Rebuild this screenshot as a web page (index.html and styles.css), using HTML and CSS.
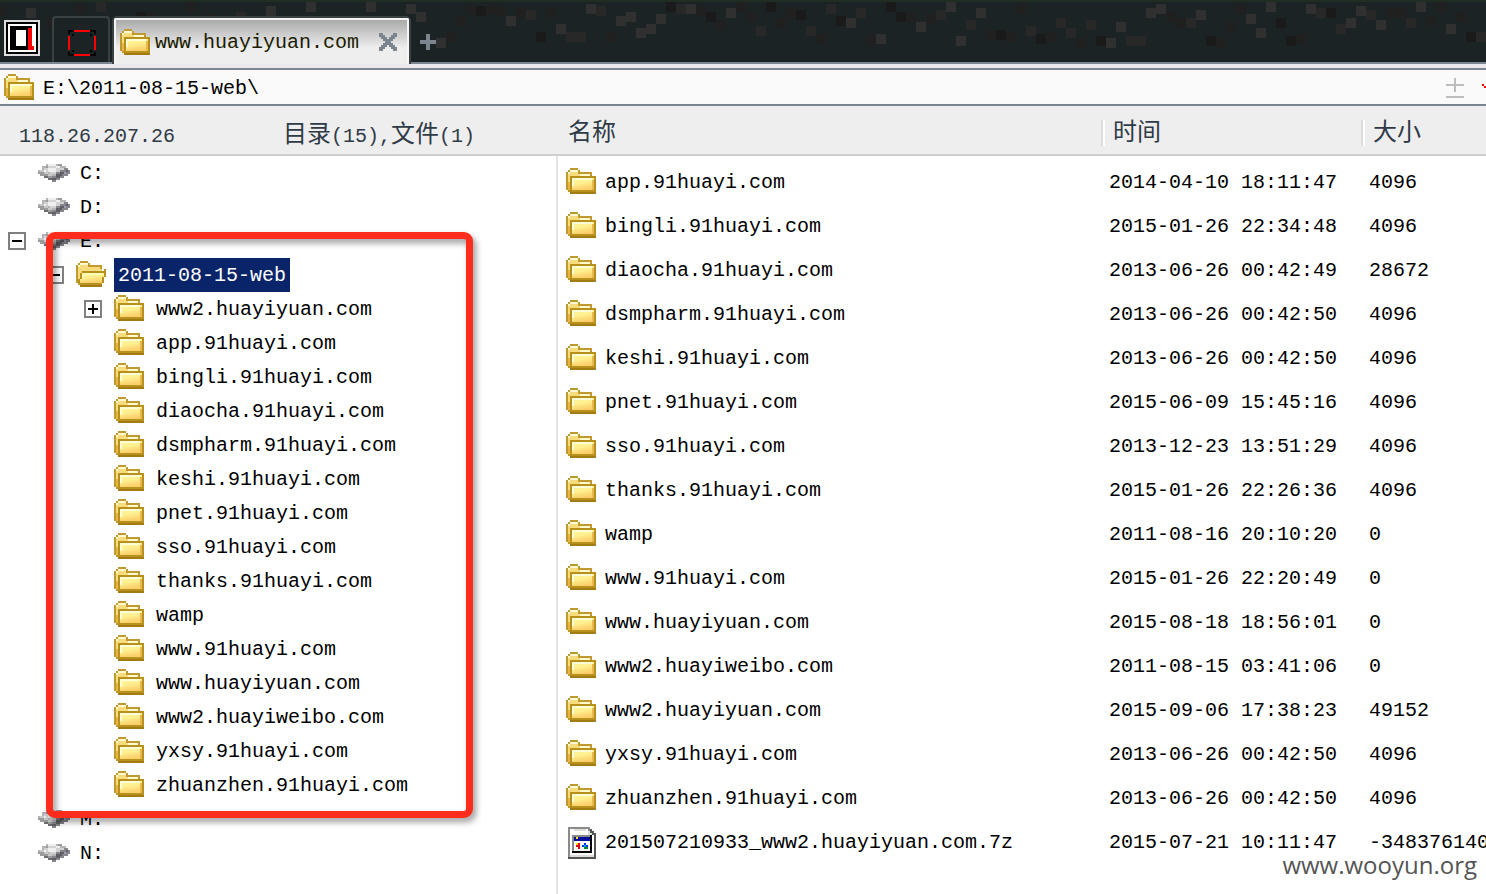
FILE: index.html
```
<!DOCTYPE html>
<html lang="zh-CN">
<head>
<meta charset="utf-8">
<title>www.huayiyuan.com</title>
<link rel="stylesheet" href="styles.css">
</head>
<body>
<svg class="defs" aria-hidden="true">
  <defs>
    <linearGradient id="paper" x1="0" y1="0" x2=".3" y2="1">
      <stop offset="0" stop-color="#fffa9c"/><stop offset=".5" stop-color="#ffef90"/><stop offset="1" stop-color="#fbcf6a"/>
    </linearGradient>
    <symbol id="folder" viewBox="0 0 15 13">
      <path fill="#f6dc7c" d="M1 2h1V1h4v1h1v1h6v8H1z"/>
      <path fill="#c09a30" d="M2 0h4v1H2zM1 1h1v1H1zM6 1h1v1h6v2h-1V3H6zM0 2h1v9H0zM1 11h1v1H1z"/>
      <path fill="#fffad0" d="M2 1h4v1H2zM1 2h1v1H1zM7 3h5v1H7z"/>
      <path fill="#e7b445" d="M1 7h1v4H1z"/>
      <path fill="#b8901c" d="M2 4h13v9H2z"/>
      <path fill="url(#paper)" d="M3 5h11v6H3z"/>
      <path fill="#fffcd8" d="M3 5h10v1H3zM3 6h1v3H3z"/>
      <path fill="#eab850" d="M13 6h1v5h-1z"/>
      <path fill="#a37a14" d="M2 12h13v1H2z"/>
    </symbol>
    <symbol id="folder-open" viewBox="0 0 15 13">
      <path fill="#f6dc7c" d="M1 2h1V1h4v1h7v10H1z"/>
      <path fill="#c09a30" d="M2 0h4v1H2zM1 1h1v1H1zM6 1h1v1h6v2h-1V3H6zM0 2h1v9H0zM1 11h1v1H1z"/>
      <path fill="#fffad0" d="M2 1h4v1H2zM1 2h1v1H1z"/>
      <path fill="#b8901c" d="M3 5h11V4h1v4h-1v3h-1v1H2v-1H1V9h1V6h1z"/>
      <path fill="url(#paper)" d="M3 6h11v2h-1v3H2V9h1z"/>
      <path fill="#fffcb8" d="M4 6h9v1H4zM3 7h1v2H3z"/>
      <path fill="#a37a14" d="M2 12h11v1H2z"/>
    </symbol>
    <symbol id="disk" viewBox="0 0 16 9">
      <path fill="#b4b4b4" d="M4 0h8v1h2v1h1v1h1v2h-1v1h-2v1h-2v1H9v1H7V8H5V7H3V6H1V5H0V3h2V1h2z"/>
      <path fill="#d2d2d2" d="M4 1h7v1h2v1h-2v1H9v1H6V4H3V2h1z"/>
      <path fill="#efefef" d="M5 0h4v1H5zM5 2h4v2H5zM3 3h1v1H3zM9 1h2v1H9z"/>
      <path fill="#9b9b9b" d="M0 4h3v1h2v1h2v1H4V6H1V5H0zM10 0h2v1h-2zM4 1h1v1H4z"/>
      <path fill="#c8c8c8" d="M1 3h2v1H1zM3 4h2v1H3zM5 5h2v1H5z"/>
      <path fill="#85858a" d="M9 4h2V3h2V2h2v1h1v2h-1v1h-2v1h-2v1H9v1H7V6h2z"/>
      <path fill="#5e5e66" d="M9 5h2V4h2v1h-1v1h-1v1H9zM14 3h1v1h-1zM7 7h2v1H7z"/>
      <path fill="#9c9cc4" d="M13 4h1v1h-1z"/>
      <path fill="#6c6c70" d="M3 6h2v1H3zM5 7h2v1H5z"/>
    </symbol>
    <symbol id="program" viewBox="0 0 14 16">
      <path fill="#555" d="M0 0h11v1h1v1h1v1h1v13H0z"/>
      <path fill="#8a8a8a" d="M0 0h11v4H2v11H0z"/>
      <path fill="#fff" d="M1 1h9v3h3v10H1z"/>
      <path fill="#deded6" d="M3 1h6v1H3zM10 2h1v1h1v1h-2zM1 14h12v1H1z"/>
      <path fill="#8a8a8a" d="M2 4h9v1H3v7H2z"/>
      <path fill="#000" d="M11 4h1v9H2v-1h9z"/>
      <path fill="#fff" d="M3 7h8v5H3z"/>
      <path fill="#00109c" d="M3 5h8v2H3z"/>
      <path fill="#ffe600" d="M4 5h1v1H4zM4 8h1v1H4z"/>
      <path fill="#e40000" d="M5 8h1v3H5zM4 9h1v1H4z"/>
      <path fill="#0030ff" d="M8 8h1v1H8zM7 9h1v1H7zM9 9h1v1H9z"/>
      <path fill="#00a6c8" d="M8 9h1v1H8z"/>
      <path fill="#008c20" d="M8 10h2v1H8z"/>
    </symbol>
  </defs>
</svg>

<header class="titlebar">
  <svg class="speckle" width="1486" height="62" aria-hidden="true">
    <g fill="none" stroke-width="10">
      <path stroke="#1a1a1a" d="M136 17h10M476 11h10M536 37h10M666 7h10M706 17h10M766 7h10M796 15h10M836 21h10M886 7h10M896 17h10M996 35h10M1036 39h10M1096 41h10M1206 41h10M1276 23h10M1286 41h10M1326 13h10M1466 37h10"/>
      <path stroke="#202020" d="M-4 11h10M46 23h10M76 9h10M146 17h10M186 7h10M206 19h10M446 37h10M456 21h10M466 9h10M486 9h10M496 11h10M516 13h10M546 13h10M606 37h10M696 11h10M716 25h10M736 7h10M746 17h10M776 23h10M786 13h10M816 39h10M866 41h10M906 17h10M926 19h10M986 35h10M1006 37h10M1016 9h10M1046 37h10M1076 43h10M1166 17h10M1176 23h10M1216 43h10M1226 27h10M1236 9h10M1296 39h10M1386 13h10M1396 13h10M1426 21h10M1436 7h10M1456 17h10"/>
      <path stroke="#282828" d="M96 7h10M236 17h10M526 15h10M566 37h10M576 37h10M596 11h10M676 9h10M756 31h10M806 31h10M826 9h10M856 13h10M936 15h10M966 25h10M1026 31h10M1056 23h10M1066 33h10M1086 25h10M1126 41h10M1136 41h10M1186 23h10M1316 13h10M1336 29h10M1366 15h10M1406 23h10M1476 37h10"/>
      <path stroke="#303030" d="M26 13h10M266 11h10M306 7h10M366 7h10M406 9h10M416 17h10M436 43h10M506 21h10M556 29h10M586 9h10M616 21h10M626 17h10M636 33h10M646 29h10M656 19h10M686 9h10M726 13h10M846 23h10M876 39h10M916 27h10M946 7h10M956 41h10M976 13h10M1106 43h10M1116 27h10M1146 13h10M1156 9h10M1196 15h10M1246 19h10M1256 33h10M1266 7h10M1306 9h10M1346 23h10M1356 11h10M1376 25h10M1416 7h10M1446 29h10"/>
    </g>
  </svg>
  <button class="app" aria-label="主菜单">
    <svg width="36" height="36" viewBox="0 0 18 18">
      <path fill="#ddd" d="M0 0h18v18H0z"/><path d="M1 1h16v16H1z"/><path fill="#fff" d="M2 2h14v14H2z"/>
      <path d="M3 3h11v1H12v11H3z"/><path fill="#fff" d="M6 5h5v8H6z"/><path fill="#f00" d="M12 4h2v9h1v2h-3z"/>
    </svg>
  </button>
  <button class="tab tab-blank" aria-label="空白标签">
    <svg width="28" height="26" viewBox="0 0 14 13">
      <path fill="#f00" d="M3 0h8v1H3zM0 3h1v7H0zM13 3h1v7h-1zM3 12h8v1H3z"/>
      <path d="M0 0h3v1H1v1H0zM11 0h3v2h-1V1h-2zM0 11h1v1h2v1H0zM13 11h1v2h-3v-1h2zM2 2h1v1H2zM11 2h1v1h-1zM2 10h1v1H2zM11 10h1v1h-1z"/>
    </svg>
  </button>
  <div class="tab tab-active">
    <svg class="folder"><use href="#folder"/></svg>
    <span class="tab-name">www.huayiyuan.com</span>
    <button class="close" aria-label="关闭">
      <svg width="18" height="18" viewBox="0 0 9 9"><path fill="#7b8590" d="M0 0h2v1h1v1h1v1h1V2h1V1h1V0h2v2H8v1H7v1H6v1h1v1h1v1h1v2H7V8H6V7H5V6H4v1H3v1H2v1H0V7h1V6h1V5h1V4H2V3H1V2H0z"/></svg>
    </button>
  </div>
  <button class="new-tab" aria-label="新建标签">
    <svg width="16" height="16" viewBox="0 0 8 8"><path fill="#7b8590" d="M3 0h2v3h3v2H5v3H3V5H0V3h3z"/></svg>
  </button>
</header>

<form class="address">
  <svg class="folder"><use href="#folder"/></svg>
  <input class="path" type="text" aria-label="路径" value="E:\2011-08-15-web\">
  <button class="tool" type="button" aria-label="书签">
    <svg width="18" height="20" viewBox="0 0 9 10"><path fill="#bdbdbd" d="M4 0h1v3h4v1H5v3H4V4H0V3h4zM0 9h9v1H0z"/></svg>
  </button>
  <button class="tool" type="button" aria-label="读取">
    <svg width="4" height="20" viewBox="0 0 2 10"><path fill="#f00" d="M0 3h1v1H0zM1 4h1v1H1z"/></svg>
  </button>
</form>

<main class="panes">
  <section class="side">
    <div class="side-head"><span>118.26.207.26</span><span class="count"><span class="cjk">目录</span>(15),<span class="cjk">文件</span>(1)</span></div>
    <ul class="tree">
      <li class="node"><svg class="disk"><use href="#disk"/></svg><span class="label">C:</span></li>
      <li class="node"><svg class="disk"><use href="#disk"/></svg><span class="label">D:</span></li>
      <li class="node"><button class="toggle" aria-label="折叠"><svg viewBox="0 0 9 9"><path d="M2 4h5v1H2z"/></svg></button><svg class="disk"><use href="#disk"/></svg><span class="label">E:</span></li>
      <li class="node level-1"><button class="toggle" aria-label="折叠"><svg viewBox="0 0 9 9"><path d="M2 4h5v1H2z"/></svg></button><svg class="folder"><use href="#folder-open"/></svg><span class="label selected">2011-08-15-web</span></li>
      <li class="node level-2"><button class="toggle" aria-label="展开"><svg viewBox="0 0 9 9"><path d="M4 2h1v2h2v1H5v2H4V5H2V4h2z"/></svg></button><svg class="folder"><use href="#folder"/></svg><span class="label">www2.huayiyuan.com</span></li>
      <li class="node level-2"><svg class="folder"><use href="#folder"/></svg><span class="label">app.91huayi.com</span></li>
      <li class="node level-2"><svg class="folder"><use href="#folder"/></svg><span class="label">bingli.91huayi.com</span></li>
      <li class="node level-2"><svg class="folder"><use href="#folder"/></svg><span class="label">diaocha.91huayi.com</span></li>
      <li class="node level-2"><svg class="folder"><use href="#folder"/></svg><span class="label">dsmpharm.91huayi.com</span></li>
      <li class="node level-2"><svg class="folder"><use href="#folder"/></svg><span class="label">keshi.91huayi.com</span></li>
      <li class="node level-2"><svg class="folder"><use href="#folder"/></svg><span class="label">pnet.91huayi.com</span></li>
      <li class="node level-2"><svg class="folder"><use href="#folder"/></svg><span class="label">sso.91huayi.com</span></li>
      <li class="node level-2"><svg class="folder"><use href="#folder"/></svg><span class="label">thanks.91huayi.com</span></li>
      <li class="node level-2"><svg class="folder"><use href="#folder"/></svg><span class="label">wamp</span></li>
      <li class="node level-2"><svg class="folder"><use href="#folder"/></svg><span class="label">www.91huayi.com</span></li>
      <li class="node level-2"><svg class="folder"><use href="#folder"/></svg><span class="label">www.huayiyuan.com</span></li>
      <li class="node level-2"><svg class="folder"><use href="#folder"/></svg><span class="label">www2.huayiweibo.com</span></li>
      <li class="node level-2"><svg class="folder"><use href="#folder"/></svg><span class="label">yxsy.91huayi.com</span></li>
      <li class="node level-2"><svg class="folder"><use href="#folder"/></svg><span class="label">zhuanzhen.91huayi.com</span></li>
      <li class="node"><svg class="disk"><use href="#disk"/></svg><span class="label">M:</span></li>
      <li class="node"><svg class="disk"><use href="#disk"/></svg><span class="label">N:</span></li>
    </ul>
    <div class="highlight"></div>
  </section>

  <section class="files">
    <table class="list">
      <colgroup><col><col class="col-time"><col class="col-size"></colgroup>
      <thead><tr><th class="cjk">名称</th><th class="cjk">时间</th><th class="cjk">大小</th></tr></thead>
      <tbody>
        <tr><td><span class="file"><svg class="folder"><use href="#folder"/></svg>app.91huayi.com</span></td><td>2014-04-10 18:11:47</td><td>4096</td></tr>
        <tr><td><span class="file"><svg class="folder"><use href="#folder"/></svg>bingli.91huayi.com</span></td><td>2015-01-26 22:34:48</td><td>4096</td></tr>
        <tr><td><span class="file"><svg class="folder"><use href="#folder"/></svg>diaocha.91huayi.com</span></td><td>2013-06-26 00:42:49</td><td>28672</td></tr>
        <tr><td><span class="file"><svg class="folder"><use href="#folder"/></svg>dsmpharm.91huayi.com</span></td><td>2013-06-26 00:42:50</td><td>4096</td></tr>
        <tr><td><span class="file"><svg class="folder"><use href="#folder"/></svg>keshi.91huayi.com</span></td><td>2013-06-26 00:42:50</td><td>4096</td></tr>
        <tr><td><span class="file"><svg class="folder"><use href="#folder"/></svg>pnet.91huayi.com</span></td><td>2015-06-09 15:45:16</td><td>4096</td></tr>
        <tr><td><span class="file"><svg class="folder"><use href="#folder"/></svg>sso.91huayi.com</span></td><td>2013-12-23 13:51:29</td><td>4096</td></tr>
        <tr><td><span class="file"><svg class="folder"><use href="#folder"/></svg>thanks.91huayi.com</span></td><td>2015-01-26 22:26:36</td><td>4096</td></tr>
        <tr><td><span class="file"><svg class="folder"><use href="#folder"/></svg>wamp</span></td><td>2011-08-16 20:10:20</td><td>0</td></tr>
        <tr><td><span class="file"><svg class="folder"><use href="#folder"/></svg>www.91huayi.com</span></td><td>2015-01-26 22:20:49</td><td>0</td></tr>
        <tr><td><span class="file"><svg class="folder"><use href="#folder"/></svg>www.huayiyuan.com</span></td><td>2015-08-18 18:56:01</td><td>0</td></tr>
        <tr><td><span class="file"><svg class="folder"><use href="#folder"/></svg>www2.huayiweibo.com</span></td><td>2011-08-15 03:41:06</td><td>0</td></tr>
        <tr><td><span class="file"><svg class="folder"><use href="#folder"/></svg>www2.huayiyuan.com</span></td><td>2015-09-06 17:38:23</td><td>49152</td></tr>
        <tr><td><span class="file"><svg class="folder"><use href="#folder"/></svg>yxsy.91huayi.com</span></td><td>2013-06-26 00:42:50</td><td>4096</td></tr>
        <tr><td><span class="file"><svg class="folder"><use href="#folder"/></svg>zhuanzhen.91huayi.com</span></td><td>2013-06-26 00:42:50</td><td>4096</td></tr>
        <tr><td><span class="file"><svg class="program"><use href="#program"/></svg>201507210933_www2.huayiyuan.com.7z</span></td><td>2015-07-21 10:11:47</td><td>-348376140</td></tr>
      </tbody>
    </table>
  </section>
</main>
<div class="watermark">www.wooyun.org</div>
</body>
</html>
```
FILE: styles.css
```
* { box-sizing: border-box; }

body {
  margin: 0;
  min-height: 100vh;
  display: flex;
  flex-direction: column;
  position: relative;
  overflow: hidden;
  background: #fff;
  color: #000;
  font: 20px/34px "Liberation Mono", "Noto Sans CJK SC", monospace;
}

button {
  padding: 0;
  border: 0;
  background: none;
  display: flex;
  align-items: center;
  justify-content: center;
  flex: none;
}

svg { flex: none; shape-rendering: crispEdges; }
.defs { position: absolute; width: 0; height: 0; }
.folder { width: 30px; height: 26px; }
.disk { width: 32px; height: 18px; }
.program { width: 28px; height: 32px; margin-left: 2px; }
.cjk { font-family: "Noto Sans CJK SC", sans-serif; font-size: 24px; font-weight: 400; }

/* Tab strip */
.titlebar {
  position: relative;
  display: flex;
  align-items: flex-end;
  height: 64px;
  padding-left: 4px;
  background: #1b2324;
  border-top: 2px solid #1f2d22;
  border-bottom: 2px solid #7b8590;
}
.speckle { position: absolute; left: 0; top: -2px; }
.app, .tab, .new-tab { position: relative; }
.app { margin-bottom: 6px; }
.tab-blank {
  width: 58px;
  height: 46px;
  margin-left: 12px;
  padding: 6px 0 0 2px;
  background: #1b2324;
  border: 2px solid #394142;
  border-bottom: 0;
  border-radius: 4px 4px 0 0;
}
.tab-active {
  display: flex;
  align-items: center;
  height: 46px;
  margin: 0 0 -2px 4px;
  padding: 0 10px 0 4px;
  background: linear-gradient(#aaa, #eee 28px);
  border: 2px solid #f4f4f4;
  border-bottom: 0;
  border-radius: 2px 2px 0 0;
  box-shadow: 0 -2px #394142, 2px 0 #394142, -2px 0 #394142;
  color: #1c1c00;
}
.tab-name { margin: 0 20px 0 5px; padding-top: 2px; }
.new-tab { margin: 0 0 12px 11px; }

/* Address bar */
.address {
  display: flex;
  align-items: center;
  height: 42px;
  margin: 0;
  padding-left: 4px;
  background: #fafafa;
  border-top: 4px solid #e9e9ee;
  border-bottom: 2px solid #7b8590;
  box-shadow: inset 0 2px #7b8590;
}
.address .folder { margin-top: 2px; }
.path {
  flex: 1;
  min-width: 0;
  height: 34px;
  margin-top: 2px;
  padding: 3px 0 0 9px;
  border: 0;
  outline: 0;
  background: none;
  color: #000;
  font: inherit;
}
.tool { margin-left: 18px; padding-top: 4px; }

/* Panes */
.panes { display: grid; grid-template-columns: 558px 1fr; flex: 1; }
.side { position: relative; border-right: 2px solid #e5e5e5; }
.side-head {
  display: flex;
  align-items: baseline;
  height: 50px;
  margin-right: -2px;
  padding: 9px 0 0 19px;
  background: #eee;
  border-bottom: 2px solid #cfcfcf;
  color: #2f3a47;
}
.count { margin-left: 108px; }

.tree { margin: 0; padding: 0; list-style: none; }
.node { display: flex; align-items: center; height: 34px; padding-left: 38px; }
.level-1 { padding-left: 76px; }
.level-2 { padding-left: 114px; }
.toggle {
  width: 18px;
  height: 18px;
  margin: 0 12px 0 -30px;
  border: 2px solid #808080;
  background: #fff;
}
.toggle svg { width: 18px; height: 18px; }
.node .folder { margin: 0 8px 2px 0; }
.node .disk { margin-right: 6px; }
.label { height: 34px; padding: 1px 4px 0; }
.selected { background: #0a246a; color: #fff; }

/* Marker frame drawn over the tree */
.highlight {
  position: absolute;
  left: 46px;
  right: 83px;
  top: 126px;
  height: 586px;
  border: 7px solid #ff2b1c;
  border-radius: 9px;
  filter: drop-shadow(3px 4px 3px rgba(0, 0, 0, .4));
  pointer-events: none;
}

/* File list */
.files { overflow: hidden; }
.list { width: 100%; table-layout: fixed; border-collapse: separate; border-spacing: 0; }
.col-time { width: 260px; }
.col-size { width: 125px; }
.list th {
  height: 50px;
  padding: 0 0 0 10px;
  background: #eee;
  border-bottom: 2px solid #cfcfcf;
  color: #2f3a47;
  text-align: left;
}
.list th + th {
  background: linear-gradient(90deg, #dcdcdc 2px, #fff 2px 4px, transparent 4px) 0 14px / 4px 26px no-repeat #eee;
  padding-left: 12px;
}
.list td { height: 44px; padding: 2px 0 0 8px; white-space: nowrap; }
.list tbody { line-height: 42px; }
.list tbody::before { content: ""; display: table-row; height: 4px; }
.file { display: flex; align-items: center; gap: 9px; }
.file .folder { margin-bottom: 4px; }

.watermark {
  position: absolute;
  right: 9px;
  bottom: 12px;
  color: #555;
  font: 24px/34px "Open Sans", "Noto Sans", sans-serif;
}
```
